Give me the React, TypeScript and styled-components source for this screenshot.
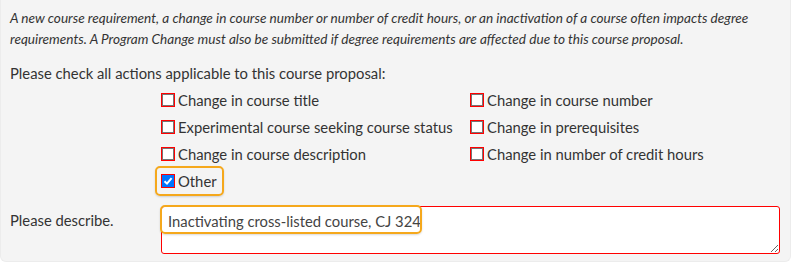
import React from 'react';
import styled, { createGlobalStyle } from 'styled-components';

const GlobalStyle = createGlobalStyle`
  html, body {
    margin: 0;
    padding: 0;
    background: #ffffff;
  }
  body {
    font-family: Lato, "Open Sans", sans-serif;
    color: #333333;
  }
`;

const Panel = styled.div`
  width: 791px;
  height: 262px;
  box-sizing: border-box;
  background: #f4f4f4;
  border: 1px solid #ececec;
  border-top: none;
  border-radius: 0 0 6px 6px;
  padding: 8px 10px 0 9px;
`;

const Notice = styled.p`
  margin: 0;
  font-size: 13.6px;
  font-style: italic;
  line-height: 21px;
  color: #333333;
`;

const Prompt = styled.div`
  margin-top: 14px;
  font-size: 14.8px;
  line-height: 18px;
`;

const OptionGrid = styled.div`
  margin-top: 9px;
  margin-left: 151px;
  display: grid;
  grid-template-columns: 309px 1fr;
  row-gap: 9px;
`;

const Option = styled.label<{ $highlight?: boolean }>`
  display: flex;
  align-items: center;
  gap: 3px;
  height: 18px;
  font-size: 14.8px;
  white-space: nowrap;
  justify-self: start;
  ${({ $highlight }) =>
    $highlight &&
    `
    margin: -6px 0 -6px -6px;
    padding: 4px 5px 4px 4px;
    border: 2px solid #f5a81c;
    border-radius: 5px;
    box-shadow: 0 1px 2px rgba(0, 0, 0, 0.15);
  `}
`;

const Box = styled.span<{ $checked?: boolean }>`
  flex: none;
  width: 14px;
  height: 14px;
  box-sizing: border-box;
  border: 1px solid #ff0000;
  display: flex;
  align-items: center;
  justify-content: center;
  background: ${({ $checked }) => ($checked ? '#0075ff' : '#ffffff')};
  box-shadow: inset 0 0 0 1px ${({ $checked }) => ($checked ? '#0075ff' : '#767676')};
`;

const DescribeRow = styled.div`
  margin-top: 16px;
  display: flex;
  align-items: flex-start;
`;

const DescribeLabel = styled.div`
  width: 151px;
  flex: none;
  font-size: 14.8px;
  line-height: 18px;
  padding-top: 5px;
`;

const FieldWrap = styled.div`
  position: relative;
  flex: 1;
`;

const Field = styled.textarea`
  display: block;
  width: 100%;
  height: 48px;
  box-sizing: border-box;
  border: 1.5px solid #ff0000;
  border-radius: 3px;
  background: #ffffff;
  padding: 5px 6px;
  font-family: Lato, "Open Sans", sans-serif;
  font-size: 14.8px;
  line-height: 18px;
  color: #444444;
  resize: vertical;
`;

const Highlight = styled.div`
  position: absolute;
  left: -1px;
  top: -1px;
  width: 262px;
  height: 29px;
  box-sizing: border-box;
  border: 2px solid #f5a81c;
  border-radius: 5px;
  box-shadow: 0 1px 2px rgba(0, 0, 0, 0.15);
  pointer-events: none;
`;

const options = [
  ['Change in course title', false],
  ['Change in course number', false],
  ['Experimental course seeking course status', false],
  ['Change in prerequisites', false],
  ['Change in course description', false],
  ['Change in number of credit hours', false],
] as const;

function Check({ checked }: { checked?: boolean }) {
  return (
    <Box $checked={checked}>
      {checked && (
        <svg width="10" height="10" viewBox="0 0 10 10">
          <path d="M1.5 5.2 L4 7.6 L8.6 2.2" fill="none" stroke="#ffffff" strokeWidth="2" />
        </svg>
      )}
    </Box>
  );
}

function App() {
  return (
    <>
      <GlobalStyle />
      <Panel>
        <Notice>
          A new course requirement, a change in course number or number of credit hours, or an inactivation of a course often impacts degree
          <br />
          requirements. A Program Change must also be submitted if degree requirements are affected due to this course proposal.
        </Notice>
        <Prompt>Please check all actions applicable to this course proposal:</Prompt>
        <OptionGrid>
          {options.map(([text, checked]) => (
            <Option key={text}>
              <Check checked={checked} />
              {text}
            </Option>
          ))}
          <Option $highlight>
            <Check checked />
            Other
          </Option>
        </OptionGrid>
        <DescribeRow>
          <DescribeLabel>Please describe.</DescribeLabel>
          <FieldWrap>
            <Field defaultValue="Inactivating cross-listed course, CJ 324" />
            <Highlight />
          </FieldWrap>
        </DescribeRow>
      </Panel>
    </>
  );
}

export default App;
